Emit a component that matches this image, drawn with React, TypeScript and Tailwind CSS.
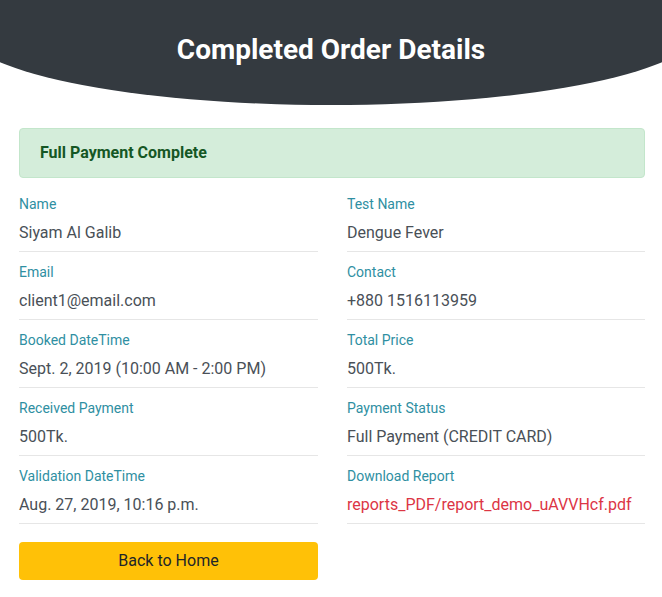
import React from "react";

const left = [
  { label: "Name", value: "Siyam Al Galib" },
  { label: "Email", value: "client1@email.com" },
  { label: "Booked DateTime", value: "Sept. 2, 2019 (10:00 AM - 2:00 PM)" },
  { label: "Received Payment", value: "500Tk." },
  { label: "Validation DateTime", value: "Aug. 27, 2019, 10:16 p.m." },
];

const right = [
  { label: "Test Name", value: "Dengue Fever" },
  { label: "Contact", value: "+880 1516113959" },
  { label: "Total Price", value: "500Tk." },
  { label: "Payment Status", value: "Full Payment (CREDIT CARD)" },
  { label: "Download Report", value: "reports_PDF/report_demo_uAVVHcf.pdf", link: true },
];

function Field({ label, value, link }: { label: string; value: string; link?: boolean }) {
  return (
    <div className="mt-[10px] border-b border-[#e6e6e6] pb-[6px] first:mt-0">
      <div className="text-[14px] leading-[21px] text-[#2f8fa2]">{label}</div>
      <div className={"mt-[6px] text-[16px] leading-[24px] " + (link ? "text-[#dc3545]" : "text-[#495057]")}>
        {link ? <a href="#">{value}</a> : value}
      </div>
    </div>
  );
}

export default function App() {
  return (
    <div className="min-h-screen overflow-x-hidden bg-white font-['Roboto',sans-serif]">
      {/* Header */}
      <div className="-ml-[37px] flex h-[105px] w-[736px] items-start justify-center rounded-b-[368px_76px] bg-[#343a40] pt-[32px]">
        <h1 className="text-[28px] leading-[36px] font-bold text-white">Completed Order Details</h1>
      </div>

      <div className="mt-[23px] ml-[19px] w-[626px]">
        <div className="flex h-[50px] items-center rounded-[4px] border border-[#c3e6cb] bg-[#d4edda] px-[20px] text-[16px] font-bold text-[#155724]">
          Full Payment Complete
        </div>

        <div className="mt-[16px] grid grid-cols-[299px_298px] gap-x-[29px]">
          <div>
            {left.map((f) => (
              <Field key={f.label} {...f} />
            ))}
            <button className="mt-[18px] h-[38px] w-full rounded-[4px] bg-[#ffc107] text-[16px] text-[#212529]">
              Back to Home
            </button>
          </div>
          <div>
            {right.map((f) => (
              <Field key={f.label} {...f} />
            ))}
          </div>
        </div>
      </div>
    </div>
  );
}
